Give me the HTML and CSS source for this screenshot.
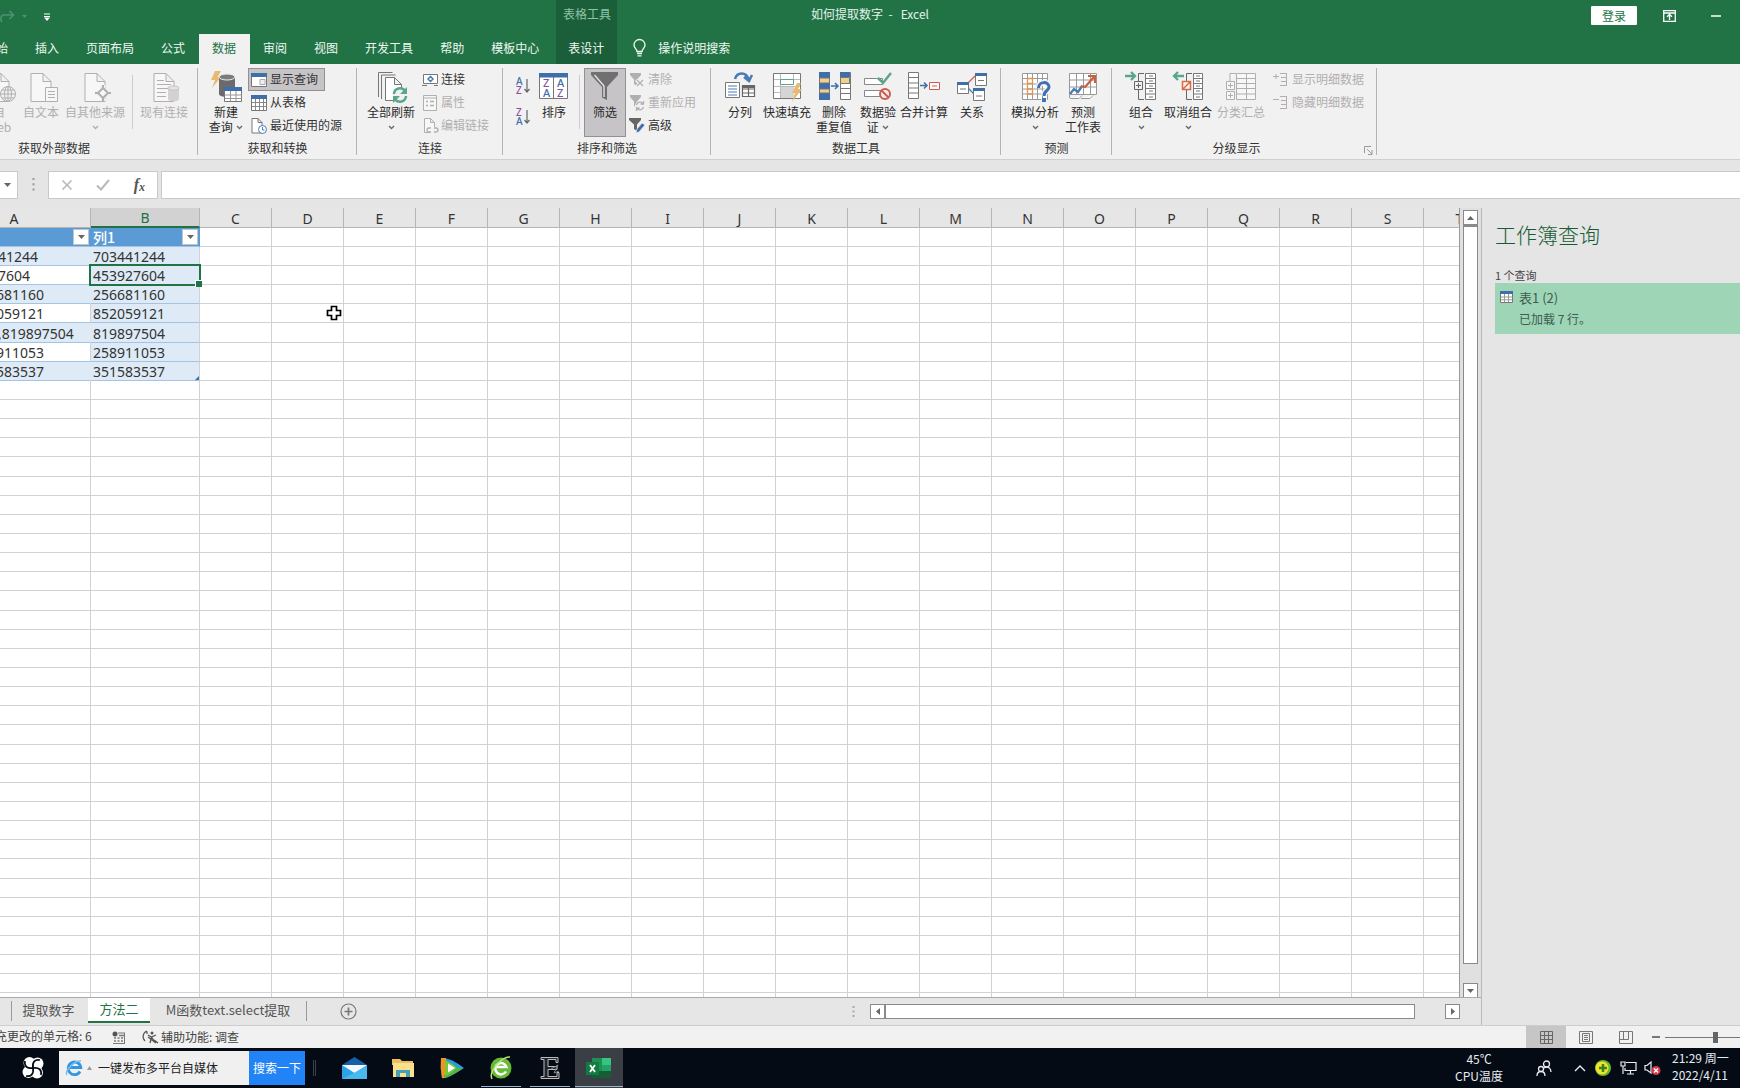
FILE: index.html
```html
<!DOCTYPE html>
<html lang="zh-CN">
<head>
<meta charset="utf-8">
<meta name="viewport" content="width=device-width, initial-scale=1">
<title>如何提取数字 - Excel</title>
<link rel="stylesheet" href="styles.css">
<script src="script.js" defer></script>
</head>
<body>
<svg class="defs" aria-hidden="true">
  <symbol id="page" viewBox="0 0 32 32"><path d="M6 2.500h12l8 8V30.500H6zM18 2.500v8h8" fill="#f7f7f7" stroke="currentColor"/></symbol>
  <symbol id="chev" viewBox="0 0 7 5"><path d="M1 1l2.500 2.500L6 1" fill="none" stroke="currentColor" stroke-width="1.300"/></symbol>
</svg>

<header class="top">
  <div class="titlebar">
    <h1 class="title">如何提取数字&nbsp; -&nbsp; &nbsp;Excel</h1>
    <div class="qat">
      <button class="plain dim" aria-label="恢复"><svg width="26" height="14" viewBox="0 0 26 14"><path d="M2 12a4.500 4.500 0 0 1 1-7h10M9.500 1l4 4-4 4" fill="none" stroke="currentColor" stroke-width="1.600"/><path d="M22 5h5l-2.500 3z" fill="currentColor"/></svg></button>
      <button class="plain" aria-label="自定义快速访问工具栏"><svg width="6" height="8" viewBox="0 0 6 8"><path d="M0 1h6M0 3.500h6" stroke="currentColor"/><path d="M0 4.500h6L3 8z" fill="currentColor"/></svg></button>
    </div>
    <span class="context-title">表格工具</span>
    <div class="window-tools">
      <button class="login">登录</button>
      <button class="plain" aria-label="功能区显示选项"><svg width="13" height="12" viewBox="0 0 13 12"><path d="M.7.7h11.600v10.600H.7zM.7 3h11.600M6.500 10V4.500M4 6.800l2.500-2.300L9 6.800" fill="none" stroke="currentColor" stroke-width="1.300"/></svg></button>
      <button class="plain" aria-label="最小化"><svg width="10" height="2" viewBox="0 0 10 2"><path d="M0 1h10" stroke="currentColor" stroke-width="1.500"/></svg></button>
    </div>
  </div>
  <nav class="tabs">
    <button>开始</button><button>插入</button><button>页面布局</button><button>公式</button><button class="active">数据</button><button>审阅</button><button>视图</button><button>开发工具</button><button>帮助</button><button>模板中心</button><button class="context">表设计</button>
    <button class="tell"><svg width="13" height="18" viewBox="0 0 13 18"><path d="M4 12.500C4 10 1 9 1 6a5.500 5.500 0 0 1 11 0c0 3-3 4-3 6.500zM4 14.500h5M4.500 16.800h4" fill="none" stroke="currentColor" stroke-width="1.300"/></svg>操作说明搜索</button>
  </nav>
</header>

<section class="ribbon" aria-label="数据">
  <div class="group g-external">
    <div class="tools">
      <button class="big w42 off"><svg viewBox="0 0 32 32"><use href="#page" width="32" height="32"/><circle cx="25" cy="23" r="7.500" fill="#f1f1f1" stroke="currentColor"/><path d="M17.500 23h15M25 15.500v15M19 19h12M19 27h12" stroke="currentColor" fill="none"/><ellipse cx="25" cy="23" rx="3.500" ry="7.500" fill="none" stroke="currentColor"/></svg><span>自<br>Web</span></button>
      <button class="big w42 off"><svg viewBox="0 0 32 32"><use href="#page" width="32" height="32"/><path d="M20.500 16.500h12v14h-12z" fill="#f7f7f7" stroke="currentColor"/><path d="M23 20.500h7M23 23.500h7M23 26.500h7" stroke="currentColor"/></svg><span>自文本</span></button>
      <button class="big w66 off"><svg viewBox="0 0 32 32"><use href="#page" width="32" height="32"/><path d="M24 14v16M16 22h16" stroke="#f1f1f1" stroke-width="5"/><path d="M24 17l5 5-5 5-5-5z" fill="#f7f7f7" stroke="currentColor" stroke-width="2"/><path d="M24 14v3M24 27v3M16 22h3M29 22h3" stroke="currentColor" stroke-width="2"/></svg><span>自其他来源</span><svg class="chev"><use href="#chev"/></svg></button>
      <span class="rule"></span>
      <button class="big w54 off"><svg viewBox="0 0 32 32"><use href="#page" width="32" height="32"/><path d="M9 9.500h7M9 13.500h14M9 17.500h12M9 21.500h9M9 25.500h9" stroke="currentColor"/><path d="M20 17v11c0 3 11 3 11 0V17z" fill="#d4d0d3"/><ellipse cx="25.500" cy="17" rx="5.500" ry="2" fill="#e6e3e5" stroke="#c5c2c4"/></svg><span>现有连接</span></button>
    </div>
    <h2>获取外部数据</h2>
  </div>

  <div class="group g-transform">
    <div class="tools">
      <button class="big w44"><svg viewBox="0 0 32 32"><path d="M5 0h6L7.500 6H11L2 17l3-8H1z" fill="#e9b872"/><path d="M9 6v17c0 4 16 4 16 0V6z" fill="#6b6b6b"/><ellipse cx="17" cy="6" rx="8" ry="3" fill="#7c7c7c" stroke="#eee"/><path d="M14.500 16.500h17v14h-17z" fill="#fff" stroke="#777"/><path d="M14 16h18v4H14z" fill="#3f6fa8"/><path d="M15 24h17M15 27.500h17M20.500 20v10M26 20v10" stroke="#999"/></svg><span>新建<br>查询&nbsp;<svg class="chev inline"><use href="#chev"/></svg></span></button>
      <div class="stack">
        <button class="small pressed"><svg viewBox="0 0 16 16"><path d="M.5 1.500h15v13H.5z" fill="#fff" stroke="#777"/><path d="M0 1h16v4H0z" fill="#3f6fa8"/><path d="M9 7.500h5v5H9z" fill="#eee" stroke="#aaa"/></svg><span>显示查询</span></button>
        <button class="small"><svg viewBox="0 0 16 16"><path d="M.5 1.500h15v14H.5z" fill="#fff" stroke="#777"/><path d="M1 7.500h14M1 11.500h14M4.500 4v11M8.500 4v11M12.500 4v11" stroke="#888"/><path d="M0 0h16v4H0z" fill="#3f6fa8"/></svg><span>从表格</span></button>
        <button class="small"><svg viewBox="0 0 16 16"><path d="M1 .5h6l4 4V15H1zM7 .5v4h4" fill="#fff" stroke="#777"/><circle cx="11.500" cy="11.500" r="4" fill="#fff" stroke="#4a7ab5"/><path d="M11.500 9v3h2" fill="none" stroke="#4a7ab5"/></svg><span>最近使用的源</span></button>
      </div>
    </div>
    <h2>获取和转换</h2>
  </div>

  <div class="group g-connect">
    <div class="tools">
      <button class="big w56"><svg viewBox="0 0 32 32"><path d="M3.500 26V1.500h14M6.500 28V4h14" fill="none" stroke="#777"/><path d="M10.500 6.500h9l7 7v16h-16zM19.500 6.500v7h7" fill="#fff" stroke="#777"/><circle cx="25" cy="24" r="7.500" fill="#f1f1f1"/><path d="M19 23a6 6 0 0 1 11-3M31 25a6 6 0 0 1-11 3" fill="none" stroke="#5ba58a" stroke-width="2.500"/><path d="M32 16v7h-7zM18 32v-7h7z" fill="#5ba58a"/></svg><span>全部刷新</span><svg class="chev"><use href="#chev"/></svg></button>
      <div class="stack">
        <button class="small"><svg viewBox="0 0 16 16"><path d="M1.500 2.500h14v9h-14zM0 13.500h5M12 13.500h4" fill="#fff" stroke="#777"/><path d="M8.500 4.500l2.500 2.500-2.500 2.500L6 7z" fill="none" stroke="#4a7ab5" stroke-width="1.500"/></svg><span>连接</span></button>
        <button class="small off"><svg viewBox="0 0 16 16"><path d="M1.500.5h13v15h-13zM1.500 3h13" fill="#f7f7f7" stroke="currentColor"/><path d="M4 6.500h2M8 6.500h4M4 10.500h2M8 10.500h4" stroke="currentColor" stroke-width="1.500"/></svg><span>属性</span></button>
        <button class="small off"><svg viewBox="0 0 16 16"><path d="M8 14.500H2.500V.5h6l4 4V9M8.500.5v4h4" fill="#f7f7f7" stroke="currentColor"/><path d="M9 10H7a2 2 0 0 0 0 4h2M12 10h2a2 2 0 0 1 0 4h-2" fill="none" stroke="currentColor" stroke-width="1.300"/></svg><span>编辑链接</span></button>
      </div>
    </div>
    <h2>连接</h2>
  </div>

  <div class="group g-sort">
    <div class="tools">
      <div class="sorts">
        <button class="plain" aria-label="升序"><svg width="16" height="18" viewBox="0 0 16 18"><text x="1" y="8" fill="#3f6fa8">A</text><text x="1" y="17" fill="#8b4f9f">Z</text><path d="M12 2v13M9.500 12l2.500 3 2.500-3" fill="none" stroke="#666" stroke-width="1.200"/></svg></button>
        <button class="plain" aria-label="降序"><svg width="16" height="18" viewBox="0 0 16 18"><text x="1" y="8" fill="#8b4f9f">Z</text><text x="1" y="17" fill="#3f6fa8">A</text><path d="M12 2v13M9.500 12l2.500 3 2.500-3" fill="none" stroke="#666" stroke-width="1.200"/></svg></button>
      </div>
      <button class="big w42"><svg viewBox="0 0 32 32"><path d="M1.500 2.500h28v25h-28zM15.500 3v24" fill="#fff" stroke="#777"/><path d="M1 2h29v4.500H1z" fill="#3f6fa8"/><g><text x="5" y="16" fill="#8b4f9f">Z</text><text x="5" y="26" fill="#3f6fa8">A</text><text x="19" y="16" fill="#3f6fa8">A</text><text x="19" y="26" fill="#8b4f9f">Z</text></g></svg><span>排序</span></button>
      <span class="rule"></span>
      <button class="big w42 pressed"><svg viewBox="0 0 32 32"><path d="M2 1h27v3L18 16v13l-5-2.500V16L2 4z" fill="#707070"/><path d="M5.500 4L15 15v11" fill="none" stroke="#e8e8e8" stroke-width="1.300"/></svg><span>筛选</span></button>
      <div class="stack">
        <button class="small off"><svg viewBox="0 0 16 16"><path d="M1 1h11v2L8 7.500V14L5 12V7.500L1 3z" fill="currentColor"/><path d="M7 8l8 7M15 7l-8 8" stroke="#f1f1f1" stroke-width="3"/><path d="M8 8l6 6M14 8l-6 6" stroke="currentColor" stroke-width="1.200"/></svg><span>清除</span></button>
        <button class="small off"><svg viewBox="0 0 16 16"><path d="M1 0h11v2L8 6.500V13L5 11V6.500L1 2z" fill="currentColor"/><circle cx="11" cy="11" r="5" fill="#f1f1f1"/><path d="M7.500 10a3.500 3.500 0 0 1 6.500-1M14.500 12a3.500 3.500 0 0 1-6.500 1M14.500 6v3h-3M7.500 16v-3h3" fill="none" stroke="currentColor" stroke-width="1.300"/></svg><span>重新应用</span></button>
        <button class="small"><svg viewBox="0 0 16 16"><path d="M0 0h12v2L8 6.500V13L5 11V6.500L0 2z" fill="#666"/><path d="M7 15l1-4 5-6 3 2-6 7z" fill="#3f6fa8" stroke="#f1f1f1" stroke-width=".7"/></svg><span>高级</span></button>
      </div>
    </div>
    <h2>排序和筛选</h2>
  </div>

  <div class="group g-data">
    <div class="tools">
      <button class="big w46"><svg viewBox="0 0 32 32"><path d="M11 8c2-7 11-8 14 1M20 6l5 4 3-6" fill="none" stroke="#4a7ab5" stroke-width="2.500"/><path d="M1.500 11.500h14v15h-14z" fill="#fff" stroke="#777"/><path d="M4 15h9M4 18h9M4 21h9M4 24h9" stroke="#4a7ab5"/><path d="M18.500 14.500h12v11h-12zM18.500 18h12M18.500 22h12M24.500 17v9" fill="#fff" stroke="#666" stroke-width="1.200"/><path d="M18 14h13v3H18z" fill="#666"/></svg><span>分列</span></button>
      <button class="big w48"><svg viewBox="0 0 32 32"><path d="M2.500 2.500h27v25h-27z" fill="#fff" stroke="#777"/><path d="M3 8.500h26M3 15.500h26M3 21.500h26M9.500 3v24M22.500 3v5" stroke="#bbb"/><path d="M10 16h13v11H10z" fill="#d5d5d5"/><path d="M9.500 8.500h13v5h-13z" fill="#fff" stroke="#5ba58a"/><path d="M26 12h4l-3 6h4L21 31l3-9h-3z" fill="#e9b872"/></svg><span>快速填充</span></button>
      <button class="big w46"><svg viewBox="0 0 32 32"><path d="M1 1h11v28H1z" fill="#3f6fa8"/><path d="M1.500 7h10v5h-10zM1.500 18h10v4h-10z" fill="#efd08c" stroke="#777"/><path d="M13 15h6M17 12l3 3-3 3" fill="none" stroke="#3f6fa8" stroke-width="1.500"/><path d="M22.500 1.500h10v27h-10zM22 17.500h10M22 22.500h10M22 12.500h10" fill="#fff" stroke="#777"/><path d="M22 1h10v5H22z" fill="#3f6fa8"/><path d="M22.500 6.500h9v6h-9z" fill="#efd08c" stroke="#777"/></svg><span>删除<br>重复值</span></button>
      <button class="big w42"><svg viewBox="0 0 32 32"><path d="M2.500 7.500h18v6h-18zM2.500 19.500h18v6h-18z" fill="#fff" stroke="#888"/><path d="M16 7l5 5 8-10" fill="none" stroke="#5ba58a" stroke-width="2.500"/><circle cx="23" cy="23" r="5" fill="#f1f1f1" stroke="#cf5b4e" stroke-width="2"/><path d="M19.500 19.500l7 7" stroke="#cf5b4e" stroke-width="2"/></svg><span>数据验<br>证&nbsp;<svg class="chev inline"><use href="#chev"/></svg></span></button>
      <button class="big w50"><svg viewBox="0 0 32 32"><path d="M.5 1.500h10v26H.5zM.5 6.500h10M.5 12h10M.5 17h10M.5 22h10" fill="#fff" stroke="#777"/><path d="M12 14.500h6M16 11.500l3 3-3 3" fill="none" stroke="#3f6fa8" stroke-width="1.500"/><path d="M21.500 11.500h10v7h-10z" fill="#fff" stroke="#cf5b4e"/><path d="M24 15h5" stroke="#cf5b4e"/></svg><span>合并计算</span></button>
      <button class="big w46"><svg viewBox="0 0 32 32"><path d="M12 12l7-7" stroke="#cf5b4e" stroke-width="1.200"/><path d="M12 17l6 6" stroke="#4a7ab5" stroke-width="1.200"/><g fill="#fff" stroke="#777"><path d="M1.500 11.500h11v11h-11zM19.500 2.500h11v12h-11zM17.500 17.500h11v12h-11z"/><path d="M4 18h6M22 9.500h6M20 25h6"/></g><path d="M1 11h12v3H1zM19 2h12v3H19zM17 17h12v3H17z" fill="#3f6fa8"/></svg><span>关系</span></button>
    </div>
    <h2>数据工具</h2>
  </div>

  <div class="group g-forecast">
    <div class="tools">
      <button class="big w50"><svg viewBox="0 0 32 32"><path d="M3.500 2.500h25v26h-25zM3.500 7.500h25M3.500 13h25M3.500 18h25M3.500 23h25M8.500 2.500v26M13.500 2.500v26M18.500 2.500v26M23.500 2.500v26" fill="#fff" stroke="#999"/><path d="M8.500 7.500h5v5h-5zM8.500 13v10h5v-5h-5" fill="none" stroke="#e2944a" stroke-width="1.300"/><path d="M19.500 17c0-7 10.500-7 10.500-1 0 4-5 3-5 9M25 27v4" fill="none" stroke="#f1f1f1" stroke-width="6"/><path d="M19.500 17c0-7 10.500-7 10.500-1 0 4-5 3-5 9" fill="none" stroke="#3f6fb5" stroke-width="3"/><path d="M23 27h4v4h-4z" fill="#3f6fb5"/></svg><span>模拟分析</span><svg class="chev"><use href="#chev"/></svg></button>
      <button class="big w46"><svg viewBox="0 0 32 32"><path d="M2.500 2.500h27v21h-27zM3 27.500h9l3-3M14 27.500h9l3-3M2.500 24v3M2.500 9h27M2.500 16h27M9.500 2.500v21M16.500 2.500v21M23.500 2.500v21" fill="#fff" stroke="#999"/><path d="M3 23l4-5 4 3 4-6" fill="none" stroke="#4a7ab5" stroke-width="2.300"/><path d="M14 15l4 1 9-10" fill="none" stroke="#c9613f" stroke-width="2.300"/><path d="M21 5h7v7" fill="none" stroke="#c9613f" stroke-width="2"/></svg><span>预测<br>工作表</span></button>
    </div>
    <h2>预测</h2>
  </div>

  <div class="group g-outline">
    <div class="tools">
      <button class="big w46"><svg viewBox="0 0 32 32"><path d="M0 5h9M6 1l4 4-4 4" fill="none" stroke="#5ba58a" stroke-width="2.300"/><path d="M19 2.500h-5.500V10M13.500 19v9.500H19M9.500 10.500h8v8h-8zM11 14.500h5M13.500 12v5" fill="none" stroke="#666"/><path d="M20.500 2.500h10v26h-10zM20.500 7.500h10M20.500 12.500h10M20.500 17.500h10M20.500 23h10" fill="#fff" stroke="#777"/><path d="M24 5h4M24 10h4M24 15h4M24 20h4M24 26h4" stroke="#777"/></svg><span>组合</span><svg class="chev"><use href="#chev"/></svg></button>
      <button class="big w48"><svg viewBox="0 0 32 32"><path d="M12 5H3M6 1L2 5l4 4" fill="none" stroke="#5ba58a" stroke-width="2.300"/><path d="M20 2.500h-5.500V10M14.500 19v9.500H20" fill="none" stroke="#666"/><path d="M10.500 10.500h8v8h-8zM10.500 18.500l8-8" fill="#f7f7f7" stroke="#d96b43" stroke-width="1.500"/><path d="M21.500 2.500h9v26h-9zM21.500 7.500h9M21.500 12.500h9M21.500 17.500h9M21.500 23h9" fill="#fff" stroke="#777"/><path d="M24 5h4M24 10h4M24 15h4M24 20h4M24 26h4" stroke="#777"/></svg><span>取消组合</span><svg class="chev"><use href="#chev"/></svg></button>
      <button class="big w58 off"><svg viewBox="0 0 32 32"><path d="M5 10V2.500h6M1.500 10.500h8v8h-8zM3 14.500h5M5.500 12v5M1.500 20.500h8v8h-8zM3 24.500h5M5.500 22v5M11.500 2.500h19v26h-19zM11.500 7.500h19M11.500 12.500h19M11.500 17.500h19M11.500 23h19M21.500 2.500v26" fill="#f7f7f7" stroke="currentColor"/></svg><span>分类汇总</span></button>
      <div class="stack">
        <button class="small off"><svg viewBox="0 0 16 16"><path d="M0 4.500h6M3 2v5M7 1.500h7M8 5.500h6M8 9.500h6M7 13.500h7M13.500 2v11" fill="none" stroke="currentColor"/></svg><span>显示明细数据</span></button>
        <button class="small off"><svg viewBox="0 0 16 16"><path d="M0 4.500h6M7 1.500h7M8 5.500h6M8 9.500h6M7 13.500h7M13.500 2v11" fill="none" stroke="currentColor"/></svg><span>隐藏明细数据</span></button>
      </div>
    </div>
    <h2>分级显示</h2>
    <button class="plain launcher" aria-label="分级显示设置"><svg width="9" height="9" viewBox="0 0 9 9"><path d="M.5 7V.5H7M3 3l5 5M8 4v4.500H4" fill="none" stroke="currentColor"/></svg></button>
  </div>
</section>

<div class="formula-bar">
  <div class="name-box"><button class="plain" aria-label="名称框列表"><svg width="7" height="4" viewBox="0 0 7 4"><path d="M0 0h7L3.500 4z" fill="currentColor"/></svg></button></div>
  <svg class="grip" width="3" height="13" viewBox="0 0 3 13"><path d="M1.500 0v13" stroke="#999" stroke-width="2" stroke-dasharray="2 3.300"/></svg>
  <div class="fx-box">
    <button class="plain" aria-label="取消" disabled><svg width="12" height="12" viewBox="0 0 12 12"><path d="M1.500 1.500l9 9M10.500 1.500l-9 9" stroke="#b9b9b9" stroke-width="1.600"/></svg></button>
    <button class="plain" aria-label="输入" disabled><svg width="14" height="12" viewBox="0 0 14 12"><path d="M1 6.500L5 10.500 13 1" fill="none" stroke="#b9b9b9" stroke-width="2"/></svg></button>
    <button class="plain fx" aria-label="插入函数">f<small>x</small></button>
  </div>
  <input class="formula" type="text" aria-label="编辑栏">
</div>

<main class="work">
  <section class="book">
    <div class="sheet-row">
      <div class="sheet">
        <table class="cells"><colgroup><col class="col-a"><col class="col-b"></colgroup><thead><tr></tr></thead><tbody></tbody></table>
        <svg class="pointer" width="16" height="16" viewBox="0 0 16 16"><path d="M5.500 1.500h5v4h4v5h-4v4h-5v-4h-4v-5h4z" fill="#fff" stroke="#000" stroke-width="1.700"/></svg>
      </div>
      <div class="vscroll">
        <button aria-label="向上滚动"><svg width="7" height="4" viewBox="0 0 7 4"><path d="M0 4h7L3.500 0z"/></svg></button>
        <div class="thumb"></div>
        <button aria-label="向下滚动"><svg width="7" height="4" viewBox="0 0 7 4"><path d="M0 0h7L3.500 4z"/></svg></button>
      </div>
    </div>
    <div class="sheet-tabs">
      <nav>
        <button class="first">提取数字</button><button class="current">方法二</button><button class="last">M函数text.select提取</button>
        <button class="plain add" aria-label="新工作表"><svg width="17" height="17" viewBox="0 0 17 17"><circle cx="8.500" cy="8.500" r="7.500" fill="none" stroke="#777" stroke-width="1.200"/><path d="M8.500 4.500v8M4.500 8.500h8" stroke="#777" stroke-width="1.700"/></svg></button>
      </nav>
      <svg class="grip" width="3" height="11" viewBox="0 0 3 11"><path d="M1.500 0v11" stroke="#aaa" stroke-width="2" stroke-dasharray="2 2.500"/></svg>
      <div class="hscroll">
        <button aria-label="向左滚动"><svg width="4" height="7" viewBox="0 0 4 7"><path d="M4 0v7L0 3.500z"/></svg></button>
        <div class="thumb"></div>
        <button aria-label="向右滚动"><svg width="4" height="7" viewBox="0 0 4 7"><path d="M0 0v7l4-3.500z"/></svg></button>
      </div>
    </div>
  </section>
  <aside class="pane">
    <h2>工作簿查询</h2>
    <p>1 个查询</p>
    <div class="query">
      <svg width="13" height="12" viewBox="0 0 13 12"><path d="M.5.5h12v11H.5z" fill="#fff" stroke="#777"/><path d="M0 0h13v3H0z" fill="#3f6fa8"/><path d="M1 6h11M1 8.800h11M4.500 3v8M8.500 3v8" stroke="#999"/></svg>
      <div><h3>表1 (2)</h3><p>已加载 7 行。</p></div>
    </div>
  </aside>
</main>

<footer class="status">
  <span class="count">充更改的单元格: 6</span>
  <svg class="macro" width="13" height="13" viewBox="0 0 13 13"><circle cx="3" cy="3" r="2.500" fill="#555"/><path d="M6 2h7M1 12.500h12M12.500 2v10" stroke="#777"/><path d="M2 7h2M5.500 7h2M9 7h2M2 10h2M5.500 10h2M9 10h2M7 4.500h5" stroke="#777" stroke-width="1.500"/></svg>
  <button class="plain access"><svg width="16" height="14" viewBox="0 0 16 14"><path d="M5 1a6 6 0 0 0-2 10M3 2h2v2" fill="none" stroke="#555" stroke-width="1.200"/><circle cx="10" cy="3" r="1.500" fill="#555"/><path d="M6 5l3.500 2L14 5M9.500 7L8 13M9.500 7l4 6M12 10l4 3M6 7l8 6" fill="none" stroke="#555" stroke-width="1.300"/></svg><span>辅助功能: 调查</span></button>
  <div class="views">
    <button class="on" aria-label="普通"><svg width="13" height="13" viewBox="0 0 13 13"><path d="M.5.500h12v12H.5zM.5 4.500h12M.5 8.500h12M4.500.5v12M8.500.5v12" fill="none" stroke="#666"/></svg></button>
    <button aria-label="页面布局"><svg width="14" height="13" viewBox="0 0 14 13"><path d="M.5.500h13v12H.5zM3.500 2.500h7v8h-7zM5 4.500h4M5 6.500h4M5 8.500h4" fill="none" stroke="#777"/></svg></button>
    <button aria-label="分页预览"><svg width="14" height="13" viewBox="0 0 14 13"><path d="M.5.500h13v12H.5zM.5 8.500h9v-8M4.500.5v8" fill="none" stroke="#777"/></svg></button>
  </div>
  <span class="minus"></span>
  <input class="zoom" type="range" aria-label="缩放" min="0" max="100" value="68">
</footer>

<footer class="taskbar">
  <button class="plain start" aria-label="开始"><svg width="22" height="22" viewBox="0 0 22 22"><g fill="#fff"><circle cx="7.500" cy="6" r="6"/><circle cx="15.500" cy="6.500" r="6"/><circle cx="15" cy="15.500" r="6"/><circle cx="6.500" cy="15" r="6"/></g><path d="M11 11C5 12 2 9 3 4M11 11C10 5 13 2 18 3M11 11c6-1 9 2 8 7M11 11c1 6-2 9-7 8" fill="none" stroke="#050b14" stroke-width="1.700"/></svg></button>
  <div class="search">
    <svg width="18" height="18" viewBox="0 0 18 18"><path d="M15 12.500a6.300 6.300 0 1 1 .8-4H5" fill="none" stroke="#3396e3" stroke-width="2.800"/><path d="M2 16C-1 12 10 1 16 2" fill="none" stroke="#76bced" stroke-width="1.500"/></svg>
    <svg width="5" height="4" viewBox="0 0 5 4"><path d="M0 4h5L2.500 0z" fill="#999"/></svg>
    <input type="text" aria-label="搜索" value="一键发布多平台自媒体"><button>搜索一下</button>
  </div>
  <span class="sep"></span>
  <nav class="apps">
    <button aria-label="邮件"><svg width="25" height="24" viewBox="0 0 25 24"><path d="M0 9L12.500 1 25 9v3H0z" fill="#1460a8"/><path d="M0 9h25v14H0z" fill="#2ca3e6"/><path d="M0 9h25l-12.500 8z" fill="#f2f8fd"/><path d="M0 23L25 10v13z" fill="#54c1ef" opacity=".7"/></svg></button>
    <button aria-label="文件资源管理器"><svg width="22" height="20" viewBox="0 0 22 20"><path d="M0 1h8l2 2h11v4H0z" fill="#eabf5d"/><path d="M1 5h21v14H1z" fill="#fbe18d"/><path d="M4 19v-7h14v7h-4v-4H8v4z" fill="#45a0b5"/></svg></button>
    <button aria-label="视频"><svg width="24" height="22" viewBox="0 0 24 22"><path d="M1 1Q0 11 2 21 6 23 24 11 10 0 1 1z" fill="#2a9be0"/><path d="M1 1h5v20H2Q0 11 1 1z" fill="#f39422"/><path d="M4 18q8-2 15-8l3 2Q10 20 4 21z" fill="#57b639"/><path d="M5 3q7 3 12 8-5 5-12 8z" fill="#78c83c"/><path d="M8 6.500L15 11l-7 4.500z" fill="#fff"/></svg></button>
    <button class="open" aria-label="浏览器"><svg width="24" height="24" viewBox="0 0 24 24"><circle cx="12" cy="12" r="10.500" fill="#66ba36"/><path d="M17 15.500A5.700 5.700 0 1 1 17.500 11H8" fill="none" stroke="#fff" stroke-width="2.500"/><path d="M3 23C-1 15 14 0 21 1" fill="none" stroke="#b6e37f" stroke-width="1.500"/></svg></button>
    <button class="open" aria-label="编辑器"><svg width="22" height="24" viewBox="0 0 22 24"><path d="M2 1.500h17v5h-2v-3H9v7h9v3H9v7h9v-4h2v6H2v-2h3v-17H2z" fill="#20252b" stroke="#bbb"/><path d="M12 13l7-4-4 8 5-2" fill="none" stroke="#888"/></svg></button>
    <button class="open front" aria-label="Excel"><svg width="26" height="22" viewBox="0 0 26 22"><path d="M6 1h19v20H6z" fill="#1f8f55"/><path d="M16 1h9v7h-9z" fill="#35c481"/><path d="M16 8h9v6h-9z" fill="#21a366"/><path d="M6 14h19v7H6z" fill="#185c37"/><path d="M0 5h13v13H0z" fill="#107c41"/><path d="M4 8l5 7M9 8l-5 7" stroke="#fff" stroke-width="1.800"/></svg></button>
  </nav>
  <div class="temp">45℃<br>CPU温度</div>
  <div class="tray">
    <svg width="16" height="17" viewBox="0 0 16 17"><g fill="none" stroke="currentColor" stroke-width="1.300"><circle cx="10.500" cy="4" r="3"/><circle cx="5" cy="9" r="2.500"/><path d="M8 8c4-2 7 0 7 4M1 16c0-6 8-6 8 0"/></g></svg>
    <svg width="12" height="8" viewBox="0 0 12 8"><path d="M1 7l5-5 5 5" fill="none" stroke="currentColor" stroke-width="1.400"/></svg>
    <svg width="16" height="16" viewBox="0 0 16 16"><circle cx="8" cy="8" r="8" fill="#69b82d"/><circle cx="7" cy="8" r="6.500" fill="#f4e22d"/><path d="M8 4v8M4 8h8" stroke="#37811d" stroke-width="2.500"/></svg>
    <svg width="17" height="14" viewBox="0 0 17 14"><path d="M6 1.500h10v8H5V7M10.500 10v3M7 13h7M1 1h4v4H1zM3 5v8" fill="none" stroke="currentColor" stroke-width="1.200"/></svg>
    <svg width="17" height="14" viewBox="0 0 17 14"><path d="M1 4.500h2L7 1v11L3 9H1z" fill="none" stroke="currentColor" stroke-width="1.200"/><circle cx="12" cy="9.500" r="4.500" fill="#d33c49"/><path d="M10 7.500l4 4M14 7.500l-4 4" stroke="#fff" stroke-width="1.300"/></svg>
  </div>
  <div class="clock">21:29 周一<br>2022/4/11</div>
</footer>
</body>
</html>
```

FILE: styles.css
```css
* { box-sizing: border-box; }
body {
  margin: 0;
  height: 100vh;
  min-height: 600px;
  display: flex;
  flex-direction: column;
  overflow: hidden;
  background: #e5e5e5;
  color: #333;
  font: 12px/15px "Noto Sans CJK SC", sans-serif;
}
button, input { font: inherit; color: inherit; border: 0; margin: 0; padding: 0; background: none; border-radius: 0; }
h1, h2, h3, p { margin: 0; font-weight: 400; font-size: inherit; }
svg { display: block; flex: none; overflow: visible; }
.defs { position: absolute; width: 0; height: 0; }
.plain { display: flex; align-items: center; white-space: nowrap; }

/* Title bar and ribbon tabs */
.top { background: #217346; color: #fff; flex: none; }
.titlebar { display: grid; grid-template-columns: 556px 61px 1fr auto; height: 34px; }
.title { grid-column: 1 / -1; grid-row: 1; text-align: center; line-height: 28px; color: #e4f2ea; }
.qat { grid-column: 1; grid-row: 1; display: flex; gap: 18px; height: 34px; align-items: center; }
.dim { color: #4d9270; }
.context-title { grid-column: 2; grid-row: 1; background: #1b5f3a; color: #8fc3a8; line-height: 28px; text-align: center; padding-left: 1px; }
.window-tools { grid-column: 4; grid-row: 1; display: flex; align-items: center; height: 31px; padding-right: 19px; }
.window-tools .plain { margin-left: 26px; }
.window-tools .plain:last-child { margin-left: 35px; }
.login { width: 46px; height: 19px; background: #fff; color: #217346; border-radius: 1px; line-height: 19px; }
.tabs { display: flex; height: 30px; margin-left: -29px; }
.tabs button { flex: none; padding: 0 14px 4px 13px; color: #f0f8f3; }
.tabs .active { background: #f1f1f1; color: #217346; }
.tabs .context { background: #1b5f3a; margin-left: 3px; padding: 0 13px 4px 12px; }
.tabs .tell { display: flex; align-items: center; gap: 12px; padding: 0 0 3px 16px; }

/* Ribbon */
.ribbon { display: flex; flex: none; height: 96px; background: #f1f1f1; border-bottom: 1px solid #cfcfcf; overflow: hidden; }
.group { flex: none; position: relative; padding-top: 4px; }
.group::after { content: ""; position: absolute; right: 0; top: 4px; bottom: 4px; width: 1px; background: #b4b4b6; }
.group h2 { text-align: center; margin-top: 3px; color: #333; }
.g-external { width: 288px; margin-left: -90px; }
.g-transform { width: 159px; }
.g-connect { width: 146px; }
.g-sort { width: 208px; }
.g-data { width: 290px; }
.g-forecast { width: 111px; }
.g-outline { width: 265px; }
.g-outline h2 { padding-right: 16px; }
.tools { display: flex; height: 69px; padding-left: 6px; }
.g-external .tools { padding-left: 68px; }
.g-forecast .tools { padding-left: 9px; }
.big { flex: none; display: flex; flex-direction: column; align-items: center; padding: 3px 0 0; white-space: nowrap; height: 69px; text-align: center; line-height: 15px; color: #2b2b2b; }
.big > svg:first-child { width: 32px; height: 32px; margin-bottom: 1px; }
.chev { width: 7px; height: 5px; margin-top: 6px; color: #666; }
.chev.inline { display: inline-block; margin: 0 0 2px 1px; vertical-align: middle; }
.w42 { width: 42px; } .w44 { width: 44px; } .w46 { width: 46px; } .w48 { width: 48px; }
.w50 { width: 50px; } .w54 { width: 54px; } .w56 { width: 56px; } .w58 { width: 58px; } .w66 { width: 66px; }
.off, .off .chev { color: #b1afb0; }
.pressed { background: #c6c4c6; box-shadow: inset 0 0 0 1px #929092; }
.stack { display: flex; flex-direction: column; align-items: flex-start; }
.small { display: flex; align-items: center; gap: 3px; height: 23px; padding: 0 7px 0 3px; white-space: nowrap; }
.small svg { width: 16px; height: 16px; }
.small span, .access span { padding-bottom: 2px; }
.rule { width: 1px; height: 54px; margin: 7px 4px 0; background: #cbcbcb; }
.sorts { display: flex; flex-direction: column; gap: 13px; width: 24px; padding: 9px 0 0 6px; }
.sorts text, .big text { font-family: "Noto Sans", sans-serif; font-size: 10px; font-weight: 500; }
.big g text { font-size: 11px; }
.launcher { position: absolute; right: 4px; bottom: 4px; color: #999; }

/* Formula bar */
.formula-bar { display: flex; flex: none; height: 48px; padding: 11px 0 9px; }
.name-box, .fx-box, .formula { background: #fff; border: 1px solid #c9c9c9; }
.name-box { width: 18px; border-left: 0; display: flex; align-items: center; padding-left: 4px; color: #666; }
.formula-bar .grip { margin: 7px 13px 0 14px; }
.fx-box { width: 110px; display: flex; align-items: center; padding: 0 12px; justify-content: space-between; }
.fx { font: italic bold 16px "Liberation Serif", serif; color: #555; }
.fx small { font-size: 12px; margin-top: 4px; }
.formula { flex: 1; min-width: 0; margin-left: 3px; border-right: 0; padding: 0 6px; }

/* Sheet */
.work { flex: 1; min-height: 0; display: flex; }
.book { flex: 1; min-width: 0; display: flex; flex-direction: column; border-right: 1px solid #b9b9b9; }
.sheet-row { flex: 1; min-height: 0; display: flex; }
.sheet { position: relative; flex: 1; min-width: 0; overflow: hidden; border-right: 1px solid #999; }
.cells { table-layout: fixed; width: 1496px; border-spacing: 0; background: #fff; font: 14px/16px "Noto Sans", "Noto Sans CJK SC", sans-serif; }
.cells col { width: 72px; }
.cells .col-a { width: 91px; }
.cells .col-b { width: 109px; }
.cells th, .cells td { padding: 2px 0 0; height: 19px; border: 0 solid #d3d1d8; border-width: 0 1px 1px 0; text-align: left; white-space: nowrap; font-weight: 400; overflow: hidden; }
.cells tr:nth-child(7n+6) td { height: 20px; }
.cells thead th { height: 20px; background: #e6e6e6; border-color: #b5b5b5; text-align: center; }
.cells thead th:first-child { padding-right: 62px; }
.cells thead .picked { background: #d2d2d2; color: #217346; border-bottom: 2px solid #217346; }
.cells .head { background: #5b9bd5; border-color: #5b9bd5; color: #fff; padding-top: 0; }
.cells .head div { display: flex; align-items: center; justify-content: space-between; font: 500 14px/18px "Noto Sans CJK SC", sans-serif; height: 18px; }
.cells .head button { width: 16px; height: 16px; margin: 0 1px 0 auto; background: #fff; border: 1px solid #c5c5c5; display: grid; place-items: center; color: #666; }
.cells .head, .cells .data { border-bottom-color: #a3c4e5; }
.cells .band { background: #deebf7; }
.cells .data.a.band { border-right-color: #deebf7; }
.cells .b { padding-left: 2px; }
.cells .data.a { text-indent: -2px; }
.cells .data.clipped { text-indent: -4px; }
.cells .selected { position: relative; overflow: visible; }
.cells .selected::before { content: ""; position: absolute; inset: -2px -2px; border: 2px solid #217346; }
.cells .selected::after { content: ""; position: absolute; right: -3px; bottom: -3px; width: 6px; height: 6px; background: #217346; border: 1px solid #fff; border-width: 1px 0 0 1px; }
.cells .corner { position: relative; }
.cells .corner::after { content: ""; position: absolute; right: 0; bottom: 0; width: 4px; height: 4px; background: #3f6fa8; clip-path: polygon(100% 0, 100% 100%, 0 100%); }
.pointer { position: absolute; left: 326px; top: 97px; }

.vscroll { width: 21px; flex: none; padding: 2px 3px 0; display: flex; flex-direction: column; background: #e0e0e0; }
.vscroll button, .hscroll button, .vscroll .thumb, .hscroll .thumb { background: #fff; border: 1px solid #8a8a8a; fill: #666; }
.vscroll button, .hscroll button { width: 15px; height: 15px; flex: none; display: grid; place-items: center; }
.vscroll .thumb { flex: 1; margin-bottom: 19px; border-top-width: 2px; }
.vscroll button:last-child { margin-bottom: -1px; }
.sheet-tabs { flex: none; height: 28px; display: flex; border-top: 1px solid #a9a9a9; background: #e6e6e6; }
.sheet-tabs nav { display: flex; flex: 1; min-width: 0; font-size: 13px; color: #555; padding-left: 11px; }
.sheet-tabs nav button { white-space: nowrap; }
.sheet-tabs .first { width: 77px; height: 20px; margin-top: 3px; border-left: 1px solid #999; padding-bottom: 4px; padding-right: 3px; }
.sheet-tabs .current { width: 62px; height: 25px; background: #fff; color: #217346; border-bottom: 2px solid #217346; padding-bottom: 2px; }
.sheet-tabs .last { width: 157px; height: 20px; margin-top: 3px; border-right: 1px solid #999; padding-bottom: 4px; }
.sheet-tabs .add { margin-left: 33px; height: 27px; }
.sheet-tabs .grip { margin: 8px 15px 0 0; }
.hscroll { flex: 0 1 611px; display: flex; padding: 6px 21px 0 0; }
.hscroll .thumb { flex: 1; height: 15px; margin-right: 30px; }

/* Queries pane */
.pane { flex: 0 0 258px; padding: 13px 0 0 13px; color: #444; }
.pane h2 { font-size: 21px; line-height: 26px; color: #155c35; font-weight: 300; }
.pane > p { font-size: 11px; margin-top: 21px; }
.query { display: flex; gap: 6px; background: #9fd5b7; height: 51px; padding: 5px 0 0 5px; color: #3b5c4f; }
.query svg { margin-top: 3px; }
.query h3 { font-size: 13px; line-height: 20px; }
.query p { line-height: 22px; }

/* Status bar */
.status { flex: none; height: 23px; display: flex; align-items: center; background: #f1f1f1; border-top: 1px solid #cdcdcd; color: #444; }
.count { margin-left: -5px; width: 117px; white-space: nowrap; padding-bottom: 3px; }
.access { margin-left: 17px; gap: 3px; }
.views { margin-left: auto; display: flex; height: 22px; }
.views button { width: 40px; display: grid; place-items: center; }
.views .on { background: #c6c6c6; }
.minus { width: 8px; height: 2px; background: #777; margin: 0 5px 0 6px; }
.zoom { appearance: none; width: 75px; height: 11px; background: linear-gradient(#777, #777) center / 100% 1px no-repeat; }
.zoom::-webkit-slider-thumb { appearance: none; width: 5px; height: 11px; background: #666; }

/* Taskbar */
.taskbar { flex: none; height: 40px; display: flex; background: #050b14; color: #e8edf2; }
.start { width: 59px; padding-left: 22px; }
.search { display: flex; align-items: center; width: 246px; height: 34px; margin-top: 3px; background: #f0f0f0; color: #222; padding-left: 6px; }
.search input { flex: 1; min-width: 0; margin: 0 0 0 6px; padding-bottom: 2px; }
.search svg + svg { margin-left: 4px; }
.search button { width: 56px; height: 34px; background: #2183f5; color: #fff; padding-bottom: 2px; }
.sep { width: 3px; height: 16px; margin: 12px 14px 0 8px; border: 1px solid #3c424a; border-width: 0 1px; }
.apps { display: flex; gap: 1px; }
.apps button { width: 48px; height: 40px; display: grid; place-items: center; position: relative; }
.apps .open::after { content: ""; position: absolute; left: 4px; right: 4px; bottom: 1px; height: 1px; background: #9cb6cf; }
.apps .front { background: #3a3f45; }
.apps .front::after { left: 0; right: 0; }
.temp { margin-left: auto; text-align: center; line-height: 17px; padding-top: 2px; }
.tray { display: flex; align-items: center; gap: 9px; margin-left: 33px; }
.tray svg:first-child { margin-right: 13px; }
.tray svg:nth-child(4) { margin-right: -2px; }
.clock { width: 68px; margin-left: 11px; line-height: 17px; padding-top: 1px; white-space: nowrap; }
```

FILE: script.js
```js
const letters = "ABCDEFGHIJKLMNOPQRST".split("");
const rows = [
  ["41244", "703441244"],
  ["7604", "453927604"],
  ["681160", "256681160"],
  ["059121", "852059121"],
  [",819897504", "819897504"],
  ["911053", "258911053"],
  ["583537", "351583537"],
];
const rowCount = 60;
const arrow = '<button aria-label="筛选"><svg width="7" height="4" viewBox="0 0 7 4"><path d="M0 0h7L3.500 4z" fill="currentColor"/></svg></button>';

const table = document.querySelector(".cells");
table.querySelector("colgroup").insertAdjacentHTML("beforeend", "<col>".repeat(letters.length - 2));
table.tHead.rows[0].innerHTML = letters
  .map((l) => `<th scope="col"${l === "B" ? ' class="picked"' : ""}>${l}</th>`)
  .join("");

let html = "";
for (let r = 0; r < rowCount; r++) {
  html += "<tr>";
  for (let c = 0; c < letters.length; c++) {
    const item = rows[r - 1];
    if (c > 1 || r > rows.length) {
      html += "<td></td>";
    } else if (r === 0) {
      html += `<td class="head ${c ? "b" : "a"}"><div>${c ? "列1" : ""}${arrow}</div></td>`;
    } else {
      const cls = ["data", c ? "b" : "a"];
      if (c || r % 2) cls.push("band");
      if (!c && item[0].length === 6) cls.push("clipped");
      if (c && r === 2) cls.push("selected");
      if (c && r === rows.length) cls.push("corner");
      html += `<td class="${cls.join(" ")}">${item[c]}</td>`;
    }
  }
  html += "</tr>";
}
table.tBodies[0].innerHTML = html;
```
